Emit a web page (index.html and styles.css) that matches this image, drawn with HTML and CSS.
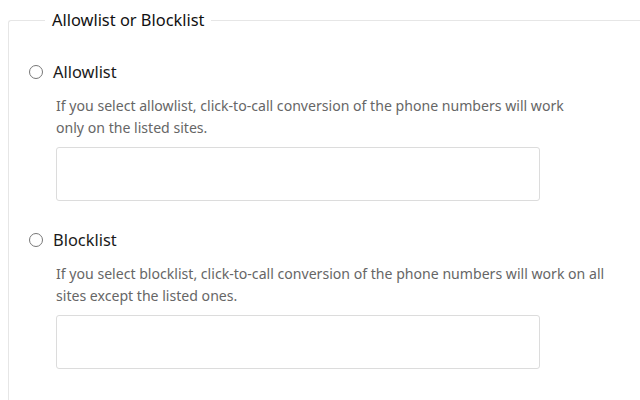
FILE: index.html
```html
<!DOCTYPE html>
<html lang="en">
<head>
<meta charset="utf-8">
<title>Allowlist or Blocklist</title>
<link rel="stylesheet" href="styles.css">
</head>
<body>
<fieldset class="group">
  <legend class="group-title">Allowlist or Blocklist</legend>
  <div class="option">
    <label class="option-head">
      <input type="radio" name="listmode" value="allow" class="radio">
      <span class="option-label">Allowlist</span>
    </label>
    <p class="option-desc">If you select allowlist, click-to-call conversion of the phone numbers will work<br>only on the listed sites.</p>
    <textarea class="sites"></textarea>
  </div>
  <div class="option">
    <label class="option-head">
      <input type="radio" name="listmode" value="block" class="radio">
      <span class="option-label">Blocklist</span>
    </label>
    <p class="option-desc">If you select blocklist, click-to-call conversion of the phone numbers will work on all<br>sites except the listed ones.</p>
    <textarea class="sites"></textarea>
  </div>
</fieldset>
</body>
</html>
```
FILE: styles.css
```css
html, body {
  background: #fff;
}
body {
  margin: 8px 0 0 8px;
  overflow: hidden;
  font-family: "Noto Sans", "Open Sans", sans-serif;
  color: #111;
}
.group {
  box-sizing: border-box;
  margin: 0;
  padding: 27px 20px 4px;
  border: 1px solid #e6e6e6;
  border-right: 0;
  border-bottom: 0;
  border-radius: 3px 0 0 0;
}
.group-title {
  margin-left: 16px;
  padding: 0 7px;
  font-size: 16.4px;
  line-height: 24px;
  color: #111;
}
.option {
  margin-bottom: 27px;
}
.option-head {
  display: flex;
  align-items: center;
  gap: 10px;
  height: 24px;
  margin-top: 1px;
  margin-bottom: -1px;
}
.radio {
  appearance: none;
  -webkit-appearance: none;
  box-sizing: border-box;
  width: 14px;
  height: 14px;
  margin: 0;
  flex: none;
  border: 1px solid #777;
  border-radius: 50%;
  background: #fff;
}
.option-label {
  font-size: 16.4px;
  line-height: 24px;
  color: #1a1a1a;
}
.option-desc {
  margin: 12px 0 8px 27px;
  font-size: 14.1px;
  line-height: 22px;
  color: #666;
}
.sites {
  display: block;
  box-sizing: border-box;
  width: 484px;
  height: 54px;
  margin: 0 0 0 27px;
  border: 1px solid #dcdcdc;
  border-radius: 3px;
  resize: none;
  font-family: inherit;
}
```
